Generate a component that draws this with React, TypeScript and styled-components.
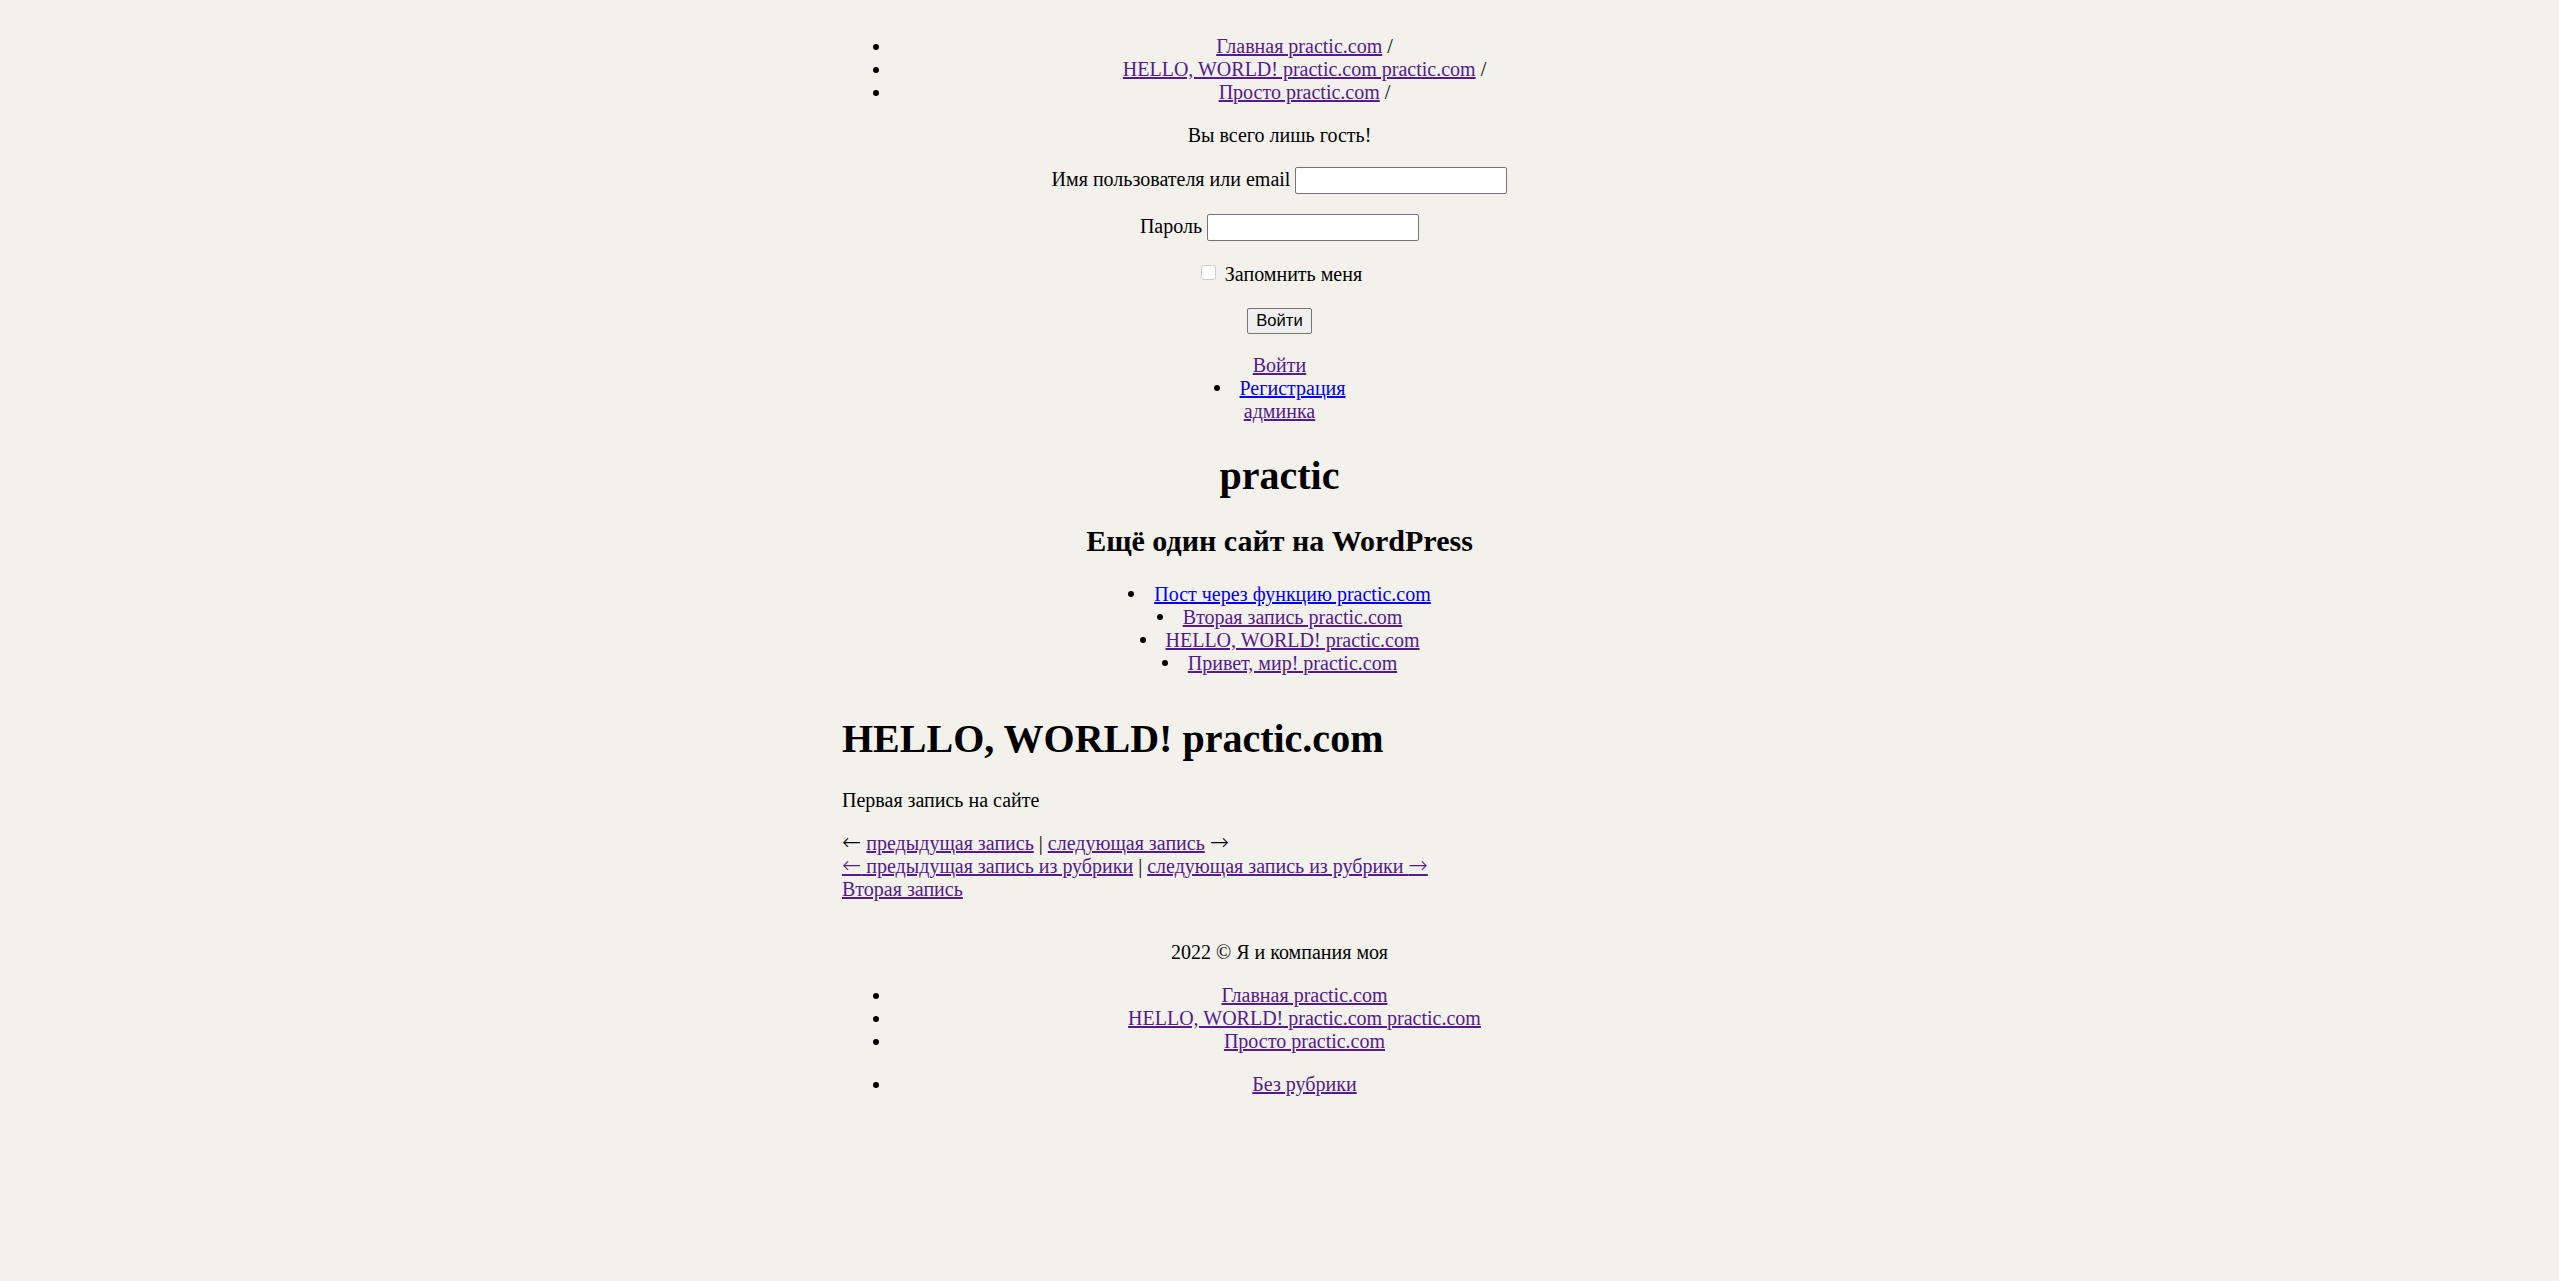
import styled, { createGlobalStyle } from "styled-components";

const GlobalStyle = createGlobalStyle`
    html, body {
        margin : 0;
        background : #f2f1ec;
    }
    body {
        font-family : 'Liberation Serif', 'Times New Roman', serif;
        font-size : 20px;
        color : #000;
    }
`

const Page = styled.div`
    width : 875px;
    margin : 0 auto;
    padding : 15px 0 60px;
`

const Link = styled.a<{ $fresh?: boolean }>`
    color : ${p => p.$fresh ? '#0000ee' : '#551a8b'};
    text-decoration : underline;
    cursor : pointer;
`

const Arrow = styled.span`
    font-family : 'DejaVu Sans', sans-serif;
    font-size : 23px;
    font-weight : 200;
    line-height : 0;
`

const MenuList = styled.ul<{ $gap?: number }>`
    margin : ${p => p.$gap ?? 20}px 0 20px;
    padding : 0 0 0 50px;
    text-align : center;
    list-style : disc outside;
`

const Note = styled.p<{ $top?: number }>`
    margin : ${p => p.$top ?? 20}px 0 20px;
    text-align : center;
`

const LoginForm = styled.form`
    margin : 0;
`

const FormRow = styled.p<{ $top?: number }>`
    margin : ${p => p.$top ?? 20}px 0 20px;
    text-align : center;
`

const TextInput = styled.input`
    box-sizing : border-box;
    width : 212px;
    height : 27px;
    padding : 1px 2px;
    border : 1px solid #767676;
    border-radius : 2px;
    background : #fff;
    font-family : 'Liberation Sans', Arial, sans-serif;
    font-size : 16.67px;
`

const Checkbox = styled.input`
    appearance : none;
    box-sizing : border-box;
    width : 15px;
    height : 15px;
    margin : 0 4px 0 4px;
    border : 1px solid #cfcfcf;
    border-radius : 3px;
    background : #fff;
    vertical-align : 1px;
`

const SubmitButton = styled.button`
    box-sizing : border-box;
    height : 26px;
    padding : 0 8px;
    border : 1px solid #767676;
    border-radius : 2px;
    background : #efefef;
    color : #000;
    font-family : 'Liberation Sans', Arial, sans-serif;
    font-size : 16.67px;
`

const MetaLinks = styled.div`
    text-align : center;

    & > a{
        display : block;
        width : fit-content;
        margin : 0 auto;
    }
`

const DotList = styled.ul<{ $top?: number }>`
    margin : ${p => p.$top ?? 0}px 0 0;
    padding : 0;
    list-style : none;
    text-align : center;
`

const DotItem = styled.li`
    &::before{
        content : '';
        display : inline-block;
        width : 6px;
        height : 6px;
        border-radius : 50%;
        background : #000;
        margin-right : 20px;
        vertical-align : 4px;
    }
`

const SiteTitle = styled.h1`
    margin : 29px 0 25px;
    font-size : 40px;
    text-align : center;
`

const Tagline = styled.h2`
    margin : 24px 0 25px;
    font-size : 30px;
    text-align : center;
`

const EntryTitle = styled.h1`
    margin : 40px 0 27px;
    font-size : 40px;
`

const EntryText = styled.p`
    margin : 20px 0;
`

const PostNav = styled.div`
    line-height : 23px;
`

const Copyright = styled.p`
    margin : 40px 0 20px;
    text-align : center;
`

const topMenu = [
    'Главная practic.com',
    'HELLO, WORLD! practic.com practic.com',
    'Просто practic.com',
]

const recentPosts = [
    { title: 'Пост через функцию practic.com', fresh: true },
    { title: 'Вторая запись practic.com', fresh: false },
    { title: 'HELLO, WORLD! practic.com', fresh: false },
    { title: 'Привет, мир! practic.com', fresh: false },
]

const App = () => {
    return (
        <>
            <GlobalStyle />
            <Page>
                <header>
                    <MenuList>
                        {topMenu.map(item => (
                            <li key={item}><Link href="#">{item}</Link> /</li>
                        ))}
                    </MenuList>

                    <Note $top={20}>Вы всего лишь гость!</Note>

                    <LoginForm onSubmit={e => e.preventDefault()}>
                        <FormRow>
                            <label htmlFor="user_login">Имя пользователя или email</label> <TextInput id="user_login" type="text" />
                        </FormRow>
                        <FormRow>
                            <label htmlFor="user_pass">Пароль</label> <TextInput id="user_pass" type="password" />
                        </FormRow>
                        <FormRow $top={22}>
                            <label><Checkbox type="checkbox" /> Запомнить меня</label>
                        </FormRow>
                        <FormRow $top={22}>
                            <SubmitButton type="submit">Войти</SubmitButton>
                        </FormRow>
                    </LoginForm>

                    <MetaLinks>
                        <Link href="#">Войти</Link>
                        <DotList>
                            <DotItem><Link href="#" $fresh>Регистрация</Link></DotItem>
                        </DotList>
                        <Link href="#">админка</Link>
                    </MetaLinks>

                    <SiteTitle>practic</SiteTitle>
                    <Tagline>Ещё один сайт на WordPress</Tagline>

                    <DotList $top={25}>
                        {recentPosts.map(post => (
                            <DotItem key={post.title}><Link href="#" $fresh={post.fresh}>{post.title}</Link></DotItem>
                        ))}
                    </DotList>
                </header>

                <main>
                    <EntryTitle>HELLO, WORLD! practic.com</EntryTitle>
                    <EntryText>Первая запись на сайте</EntryText>
                    <PostNav>
                        <div><Arrow>←</Arrow> <Link href="#">предыдущая запись</Link> | <Link href="#">следующая запись</Link> <Arrow>→</Arrow></div>
                        <div><Link href="#"><Arrow>←</Arrow> предыдущая запись из рубрики</Link> | <Link href="#">следующая запись из рубрики <Arrow>→</Arrow></Link></div>
                        <div><Link href="#">Вторая запись</Link></div>
                    </PostNav>
                </main>

                <footer>
                    <Copyright>2022 © Я и компания моя</Copyright>
                    <MenuList>
                        {topMenu.map(item => (
                            <li key={item}><Link href="#">{item}</Link></li>
                        ))}
                    </MenuList>
                    <MenuList>
                        <li><Link href="#">Без рубрики</Link></li>
                    </MenuList>
                </footer>
            </Page>
        </>
    )
}

export default App;
